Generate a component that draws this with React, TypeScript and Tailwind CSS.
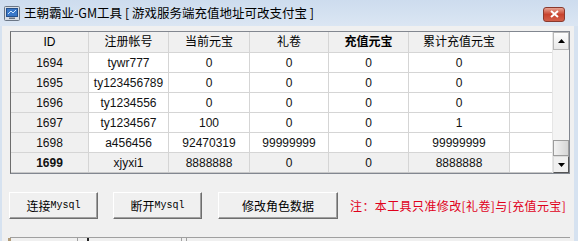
import React from "react";

const FONT = { fontFamily: '"Liberation Sans", "Noto Sans CJK SC", sans-serif' };
const SONG = { fontFamily: '"Liberation Mono", "Noto Sans CJK SC", monospace' };
const CJK = { fontFamily: '"Noto Sans CJK SC", sans-serif' };

const COLS = ["w-[78px]", "w-[80px]", "w-[81px]", "w-[79px]", "w-[80px]", "w-[101px]"];
const HEAD = ["ID", "注册帐号", "当前元宝", "礼卷", "充值元宝", "累计充值元宝"];

const ROWS = [
  ["1694", "tywr777", "0", "0", "0", "0"],
  ["1695", "ty123456789", "0", "0", "0", "0"],
  ["1696", "ty1234556", "0", "0", "0", "0"],
  ["1697", "ty1234567", "100", "0", "0", "1"],
  ["1698", "a456456", "92470319", "99999999", "0", "99999999"],
  ["1699", "xjyxi1", "8888888", "0", "0", "8888888"],
];

function AppIcon() {
  return (
    <svg width="16" height="15" viewBox="0 0 16 15">
      <rect x="0.5" y="0.5" width="15" height="14" rx="1" fill="#d8dde4" stroke="#6b7685" />
      <rect x="2.5" y="2.5" width="11" height="8" fill="#3a78c8" stroke="#24508c" />
      <path d="M4 8 L7 5 L9 7 L12 4" stroke="#cfe6ff" strokeWidth="1" fill="none" />
      <rect x="5" y="11.5" width="6" height="1.5" fill="#6b7685" />
    </svg>
  );
}

function ScrollBar() {
  return (
    <div className="flex w-[17px] flex-col border-l border-[#e6e6e6] bg-[#f4f4f4]">
      <div className="flex h-[18px] items-center justify-center border border-[#b8b8b8] bg-[linear-gradient(to_bottom,#fdfdfd,#e8e8e8)]">
        <svg width="7" height="4" viewBox="0 0 7 4">
          <path d="M0 4 L3.5 0 L7 4 Z" fill="#000" />
        </svg>
      </div>
      <div className="flex-1" />
      <div className="h-[16px] border border-[#9c9c9c] bg-[linear-gradient(to_right,#f2f2f2,#d6d6d6)]" />
      <div className="flex h-[17px] items-center justify-center border border-t-[#dcdcdc] border-l-[#dcdcdc] border-r-[#555] border-b-[#555] bg-[#f0f0f0]">
        <svg width="7" height="4" viewBox="0 0 7 4">
          <path d="M0 0 L7 0 L3.5 4 Z" fill="#000" />
        </svg>
      </div>
    </div>
  );
}

function Btn({ children, className }: { children: React.ReactNode; className: string }) {
  return (
    <button
      className={`flex h-[27px] items-center justify-center border border-t-white border-l-white border-r-[#6e6e6e] border-b-[#6e6e6e] bg-[#f0f0f0] text-[12px] text-black shadow-[inset_-1px_-1px_0_#a0a0a0] ${className}`}
    >
      {children}
    </button>
  );
}

export default function App() {
  return (
    <div className="h-[241px] w-[578px] overflow-hidden bg-[#d6e2f0]" style={FONT}>
      {/* 标题栏 */}
      <div className="flex h-[26px] items-center justify-between bg-[linear-gradient(to_bottom,#cddcee,#dbe6f3)] pl-[4px] pr-[13px]">
        <div className="flex items-center gap-[4px]">
          <AppIcon />
          <span className="text-[12.5px] text-black" style={CJK}>
            王朝霸业-GM工具 [ 游戏服务端充值地址可改支付宝 ]
          </span>
        </div>
        <div className="mt-[2px] flex h-[15px] w-[22px] items-center justify-center rounded-[3px] border border-[#8a3a2e] bg-[linear-gradient(to_bottom,#e8a493,#c8432e_50%,#d2604a)]">
          <svg width="9" height="8" viewBox="0 0 9 8">
            <path d="M1 1 L8 7 M8 1 L1 7" stroke="#fff" strokeWidth="2" />
          </svg>
        </div>
      </div>

      {/* 主体 */}
      <div className="ml-[2px] mr-[4px] flex h-[215px] flex-col bg-[#f0f0f0] pl-[8px] pr-[4px] pt-[5px]">
        <div className="flex h-[143px] border border-[#828790] border-l-[#6d6d6d] bg-white">
          <div className="flex flex-1 flex-col">
            <div className="flex h-[21px] border-b border-[#d5d5d5]">
              {HEAD.map((h, i) => (
                <div
                  key={h}
                  className={`${COLS[i]} flex items-center justify-center border-r border-[#d5d5d5] bg-[#f0f0f0] text-[12px] text-black ${i === 4 ? "font-bold" : ""}`}
                >
                  {h}
                </div>
              ))}
            </div>
            {ROWS.map((r, ri) => {
              const last = ri === ROWS.length - 1;
              return (
                <div key={r[0]} className={`flex h-[20px] border-b ${last ? "border-[#c8c8c8]" : "border-[#d5d5d5]"}`}>
                  {r.map((c, ci) => (
                    <div
                      key={ci}
                      className={`${COLS[ci]} flex items-center justify-center border-r border-[#d5d5d5] text-[12px] text-[#111] ${ci === 0 || last ? "bg-[#f0f0f0]" : "bg-white"} ${ci === 0 && last ? "font-bold" : ""}`}
                    >
                      {c}
                    </div>
                  ))}
                </div>
              );
            })}
          </div>
          <ScrollBar />
        </div>

        {/* 按钮 */}
        <div className="ml-[-1px] mt-[18px] flex items-center">
          <Btn className="w-[89px]">
            <span style={CJK}>连接</span>
            <span className="text-[10px]" style={SONG}>Mysql</span>
          </Btn>
          <Btn className="ml-[15px] w-[89px]">
            <span style={CJK}>断开</span>
            <span className="text-[10px]" style={SONG}>Mysql</span>
          </Btn>
          <Btn className="ml-[16px] w-[120px]">
            <span style={CJK}>修改角色数据</span>
          </Btn>
          <span className="ml-[12px] whitespace-nowrap text-[12px] tracking-[0.4px] text-[#e0001b]" style={CJK}>
            注：本工具只准修改[礼卷]与[充值元宝]
          </span>
        </div>

        {/* 状态栏 */}
        <div className="mt-[18px] flex h-[6px] border-t border-[#a0a0a0]">
          <div className="ml-[-2px] w-[3px] bg-[#b09a78]" />
          <div className="ml-[66px] w-px bg-[#a0a0a0]" />
          <div className="ml-[9px] w-[2px] bg-[#222]" />
          <div className="ml-[92px] w-px bg-[#a0a0a0]" />
          <div className="ml-[4px] w-px bg-[#a0a0a0]" />
        </div>
      </div>
    </div>
  );
}
